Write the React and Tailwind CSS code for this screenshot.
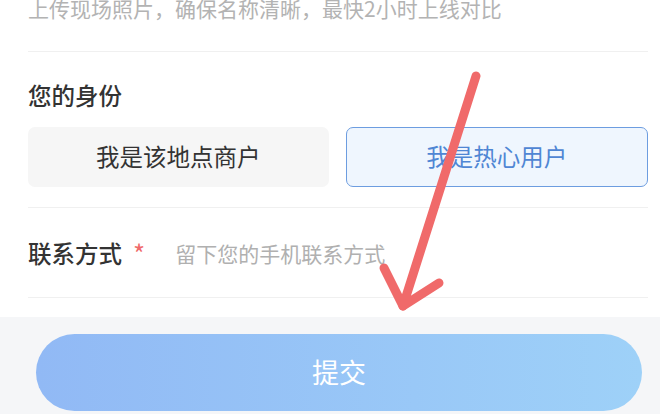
const FONT = { fontFamily: '"Noto Sans CJK SC", "Noto Sans", sans-serif' }

const Arrow = () => (
  <svg className="pointer-events-none absolute inset-0" width="660" height="414" viewBox="0 0 660 414">
    <g stroke="#f06a6a" strokeWidth="9" strokeLinecap="round" strokeLinejoin="round" fill="none">
      <path d="M476 76 L403 306" />
      <path d="M384 268 L403 306 L439 283" />
    </g>
  </svg>
)

export default function App() {
  return (
    <div className="relative flex h-[414px] w-[660px] flex-col overflow-hidden bg-white" style={FONT}>
      <div className="flex flex-col pl-[28px] pr-[12px]">
        <div className="flex h-[52px] flex-col border-b border-[#f0f0f0]">
          <p className="-mt-[4px] text-[21px] leading-[24px] whitespace-nowrap text-[#b3b3b3]">
            上传现场照片，确保名称清晰，最快2小时上线对比
          </p>
        </div>

        <div className="h-[156px] border-b border-[#f0f0f0] pt-[31px]">
          <h3 className="text-[23.5px] leading-[24px] font-medium text-[#333]">您的身份</h3>
          <div className="mt-[20px] flex gap-[17px]">
            <button className="flex h-[60px] flex-1 items-center justify-center rounded-[7px] bg-[#f6f6f6] text-[23.5px] text-[#333]">
              我是该地点商户
            </button>
            <button className="flex h-[60px] flex-1 items-center justify-center rounded-[7px] border-[1.5px] border-[#6d9de0] bg-[#eff6fe] text-[23.5px] text-[#4f86d4]">
              我是热心用户
            </button>
          </div>
        </div>

        <div className="flex h-[90px] items-center border-b border-[#f0f0f0]">
          <span className="text-[23.5px] leading-[24px] font-medium text-[#333]">联系方式</span>
          <span className="ml-[11px] text-[26px] leading-[24px] text-[#f06a6a]">*</span>
          <span className="ml-[30px] text-[21px] leading-[24px] text-[#b0b0b0]">留下您的手机联系方式</span>
        </div>
      </div>

      <div className="mt-[19px] flex-1 bg-[#f5f6f8] pt-[17px] pl-[36px] pr-[18px]">
        <button className="flex h-[77px] w-full items-center justify-center rounded-full bg-gradient-to-r from-[#91b9f5] to-[#9ed1f8] text-[27px] text-white">
          提交
        </button>
      </div>

      <Arrow />
    </div>
  )
}
